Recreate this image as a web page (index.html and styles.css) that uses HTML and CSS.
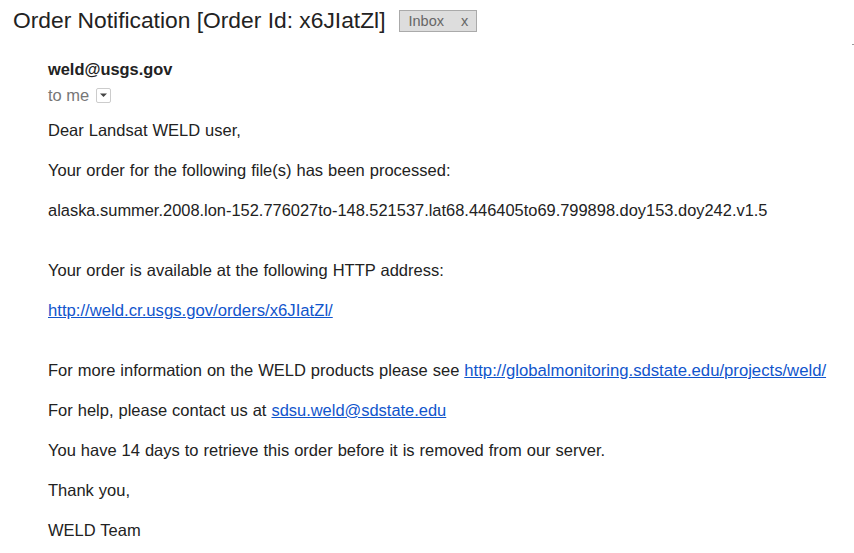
FILE: index.html
```html
<!DOCTYPE html>
<html>
<head>
<meta charset="utf-8">
<link rel="stylesheet" href="styles.css">
</head>
<body>
<div class="header">
  <h1 class="subject">Order Notification [Order Id: x6JIatZl]</h1>
  <span class="label">Inbox <span class="label-x">x</span></span>
</div>
<div class="corner-mark"></div>
<div class="message">
  <div class="sender">weld@usgs.gov</div>
  <div class="recipient">to me <span class="dropdown"><svg width="9" height="5" viewBox="0 0 9 5"><path d="M1 0.5h7L4.5 4z" fill="#444"/></svg></span></div>
  <div class="content">
    <p>Dear Landsat WELD user,</p>
    <p>Your order for the following file(s) has been processed:</p>
    <p class="gap filename">alaska.summer.2008.lon-152.776027to-148.521537.lat68.446405to69.799898.doy153.doy242.v1.5</p>
    <p>Your order is available at the following HTTP address:</p>
    <p class="gap"><a href="#">http://weld.cr.usgs.gov/orders/x6JIatZl/</a></p>
    <p>For more information on the WELD products please see <a href="#">http://globalmonitoring.sdstate.edu/projects/weld/</a></p>
    <p>For help, please contact us at <a href="#" class="mail">sdsu.weld@sdstate.edu</a></p>
    <p>You have 14 days to retrieve this order before it is removed from our server.</p>
    <p>Thank you,</p>
    <p>WELD Team</p>
  </div>
</div>
</body>
</html>
```
FILE: styles.css
```css
html, body {
  margin: 0;
  padding: 0;
  background: #fff;
}
body {
  font-family: "Liberation Sans", Arial, sans-serif;
  color: #222;
  position: relative;
}
.header {
  display: flex;
  align-items: center;
  padding: 7px 0 0 13px;
  height: 26px;
}
.subject {
  margin: 0;
  font-size: 22.8px;
  font-weight: normal;
  line-height: 26px;
  color: #222;
}
.label {
  margin-left: 14px;
  margin-top: 1px;
  display: inline-flex;
  align-items: center;
  height: 20px;
  padding: 0 8px 0 8px;
  background: #ddd;
  border: 1px solid #aaa;
  color: #666;
  font-size: 14.5px;
}
.label-x {
  margin-left: 17px;
}
.corner-mark {
  position: absolute;
  right: 0;
  top: 44px;
  width: 2px;
  height: 1px;
  background: #999;
}
.message {
  padding: 26px 0 0 48px;
}
.sender {
  font-weight: bold;
  font-size: 16.4px;
  line-height: 20px;
  color: #222;
}
.recipient {
  margin-top: 7px;
  font-size: 16.5px;
  line-height: 18px;
  color: #777;
  display: flex;
  align-items: center;
}
.dropdown {
  display: inline-flex;
  align-items: center;
  justify-content: center;
  width: 13px;
  height: 13px;
  margin-left: 7px;
  border: 1px solid #ccc;
  border-radius: 2px;
}
.content {
  padding-top: 16px;
}
.content p {
  margin: 0 0 20px 0;
  font-size: 16.5px;
  line-height: 20px;
  height: 20px;
  word-spacing: 0.4px;
  color: #222;
}
.content p.gap {
  margin-bottom: 40px;
}
.content p.filename {
  font-size: 16.43px;
}
.content a {
  color: #1155cc;
  font-size: 16.7px;
  line-height: 16px;
}
.content a.mail {
  font-size: 16.45px;
}
```
